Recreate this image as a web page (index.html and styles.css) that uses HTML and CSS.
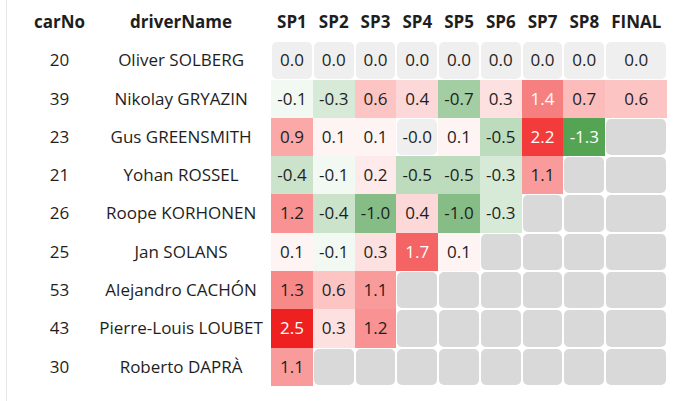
FILE: index.html
```html
<!DOCTYPE html>
<html>
<head>
<meta charset="utf-8">
<link rel="stylesheet" href="styles.css">
</head>
<body>
<div class="frame">
<table class="grid">
<thead>
<tr><th class="car">carNo</th><th class="driver">driverName</th><th class="sp">SP1</th><th class="sp">SP2</th><th class="sp">SP3</th><th class="sp">SP4</th><th class="sp">SP5</th><th class="sp">SP6</th><th class="sp">SP7</th><th class="sp">SP8</th><th class="final">FINAL</th></tr>
</thead>
<tbody>
<tr><td>20</td><td>Oliver SOLBERG</td><td class="v zero">0.0</td><td class="v zero">0.0</td><td class="v zero">0.0</td><td class="v zero">0.0</td><td class="v zero">0.0</td><td class="v zero">0.0</td><td class="v zero">0.0</td><td class="v zero">0.0</td><td class="v zero">0.0</td></tr>
<tr><td>39</td><td>Nikolay GRYAZIN</td><td class="v" style="background:#f2f8f2">-0.1</td><td class="v" style="background:#d7ead7">-0.3</td><td class="v" style="background:#fdc4c4">0.6</td><td class="v" style="background:#fdd8d8">0.4</td><td class="v" style="background:#a3cea3">-0.7</td><td class="v" style="background:#fde1e1">0.3</td><td class="v light" style="background:#f67f7f">1.4</td><td class="v" style="background:#fcbcbc">0.7</td><td class="v" style="background:#fdc4c4">0.6</td></tr>
<tr><td>23</td><td>Gus GREENSMITH</td><td class="v" style="background:#fba8a8">0.9</td><td class="v" style="background:#fef4f4">0.1</td><td class="v" style="background:#fef4f4">0.1</td><td class="v zero">-0.0</td><td class="v" style="background:#fef4f4">0.1</td><td class="v" style="background:#bddcbd">-0.5</td><td class="v light" style="background:#f43b3b">2.2</td><td class="v light" style="background:#54a454">-1.3</td><td class="v na"></td></tr>
<tr><td>21</td><td>Yohan ROSSEL</td><td class="v" style="background:#cae3ca">-0.4</td><td class="v" style="background:#f2f8f2">-0.1</td><td class="v" style="background:#feeaea">0.2</td><td class="v" style="background:#bddcbd">-0.5</td><td class="v" style="background:#bddcbd">-0.5</td><td class="v" style="background:#d7ead7">-0.3</td><td class="v" style="background:#fa9b9b">1.1</td><td class="v na"></td><td class="v na"></td></tr>
<tr><td>26</td><td>Roope KORHONEN</td><td class="v" style="background:#f99292">1.2</td><td class="v" style="background:#cae3ca">-0.4</td><td class="v" style="background:#86bd86">-1.0</td><td class="v" style="background:#fdd8d8">0.4</td><td class="v" style="background:#86bd86">-1.0</td><td class="v" style="background:#d7ead7">-0.3</td><td class="v na"></td><td class="v na"></td><td class="v na"></td></tr>
<tr><td>25</td><td>Jan SOLANS</td><td class="v" style="background:#fef4f4">0.1</td><td class="v" style="background:#f2f8f2">-0.1</td><td class="v" style="background:#fde1e1">0.3</td><td class="v light" style="background:#f46464">1.7</td><td class="v" style="background:#fef4f4">0.1</td><td class="v na"></td><td class="v na"></td><td class="v na"></td><td class="v na"></td></tr>
<tr><td>53</td><td>Alejandro CACHÓN</td><td class="v" style="background:#f88989">1.3</td><td class="v" style="background:#fdc4c4">0.6</td><td class="v" style="background:#fa9b9b">1.1</td><td class="v na"></td><td class="v na"></td><td class="v na"></td><td class="v na"></td><td class="v na"></td><td class="v na"></td></tr>
<tr><td>43</td><td>Pierre-Louis LOUBET</td><td class="v light" style="background:#ef2020">2.5</td><td class="v" style="background:#fde1e1">0.3</td><td class="v" style="background:#f99292">1.2</td><td class="v na"></td><td class="v na"></td><td class="v na"></td><td class="v na"></td><td class="v na"></td><td class="v na"></td></tr>
<tr><td>30</td><td>Roberto DAPRÀ</td><td class="v" style="background:#fa9b9b">1.1</td><td class="v na"></td><td class="v na"></td><td class="v na"></td><td class="v na"></td><td class="v na"></td><td class="v na"></td><td class="v na"></td><td class="v na"></td></tr>
</tbody>
</table>
</div>
</body>
</html>
```

FILE: styles.css
```css
html, body {
  margin: 0;
  padding: 0;
  background: #ffffff;
}

body {
  font-family: "Open Sans", "Noto Sans", sans-serif;
  font-size: 17px;
  color: #1e1e1e;
}

.frame {
  margin-left: 6px;
  border-left: 1px solid #e6e6e6;
  min-height: 401px;
  padding: 3px 0 0 21px;
  box-sizing: border-box;
}

.grid {
  border-collapse: separate;
  border-spacing: 0;
}

.grid th,
.grid td {
  border: 1px solid transparent;
  padding: 6px 5px;
  line-height: 24.3px;
  text-align: center;
  white-space: nowrap;
}

.grid th {
  font-weight: 700;
  color: #1e1e1e;
}

.grid th.car {
  width: 50px;
}

.grid th.driver {
  width: 168px;
}

.grid th.sp {
  width: 29.6px;
}

.grid th.final {
  width: 48px;
}

.grid td.v {
  background-clip: border-box;
}

.grid td.light {
  color: #ffffff;
}

.grid td.zero {
  background: #efefef;
  background-clip: padding-box;
  border-radius: 6px;
}

.grid td.na {
  background: #d9d9d9;
  background-clip: padding-box;
  border-radius: 6px;
}
```
